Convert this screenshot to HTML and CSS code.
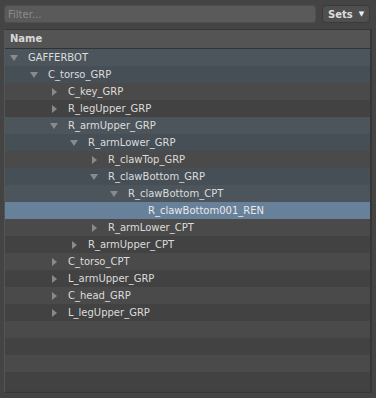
FILE: index.html
```html
<!DOCTYPE html>
<html lang="en">
<head>
    <meta charset="UTF-8">
    <meta name="viewport" content="width=device-width, initial-scale=1.0">
    <title>Hierarchy</title>
    <link rel="stylesheet" href="styles.css">
</head>
<body>

    <div class="toolbar">
        <input type="text" class="filter" placeholder="Filter...">
        <button class="sets-btn">Sets <span class="arrow">&#9660;</span></button>
    </div>

    <div class="tree">
        <div class="tree-header">Name</div>
        <div class="rows">
            <div class="row path lvl-0"><span class="toggle open"></span>GAFFERBOT</div>
            <div class="row path lvl-1"><span class="toggle open"></span>C_torso_GRP</div>
            <div class="row lvl-2"><span class="toggle"></span>C_key_GRP</div>
            <div class="row lvl-2"><span class="toggle"></span>R_legUpper_GRP</div>
            <div class="row path lvl-2"><span class="toggle open"></span>R_armUpper_GRP</div>
            <div class="row path lvl-3"><span class="toggle open"></span>R_armLower_GRP</div>
            <div class="row lvl-4"><span class="toggle"></span>R_clawTop_GRP</div>
            <div class="row path lvl-4"><span class="toggle open"></span>R_clawBottom_GRP</div>
            <div class="row path lvl-5"><span class="toggle open"></span>R_clawBottom_CPT</div>
            <div class="row selected lvl-6"><span class="toggle none"></span>R_clawBottom001_REN</div>
            <div class="row lvl-4"><span class="toggle"></span>R_armLower_CPT</div>
            <div class="row lvl-3"><span class="toggle"></span>R_armUpper_CPT</div>
            <div class="row lvl-2"><span class="toggle"></span>C_torso_CPT</div>
            <div class="row lvl-2"><span class="toggle"></span>L_armUpper_GRP</div>
            <div class="row lvl-2"><span class="toggle"></span>C_head_GRP</div>
            <div class="row lvl-2"><span class="toggle"></span>L_legUpper_GRP</div>
            <div class="row"></div>
            <div class="row"></div>
            <div class="row"></div>
            <div class="row"></div>
        </div>
    </div>

</body>
</html>
```

FILE: styles.css
```css
* {
    margin: 0;
    padding: 0;
    box-sizing: border-box;
}
body {
    font-family: 'DejaVu Sans', sans-serif;
    font-size: 10px;
    background-color: #444444;
    color: #dcdcdc;
}
.toolbar {
    display: flex;
    gap: 6px;
    padding: 5px 6px 0 4px;
    height: 23px;
}
.filter {
    flex: 1;
    height: 18px;
    padding: 0 3px;
    font-family: 'DejaVu Sans', sans-serif;
    font-size: 10px;
    color: #dcdcdc;
    background-color: #5a5a5a;
    border: 1px solid #4e4e4e;
    border-radius: 3px;
    outline: none;
}
.filter::placeholder {
    color: #8c8c8c;
}
.sets-btn {
    width: 48px;
    height: 18px;
    font-family: 'DejaVu Sans', sans-serif;
    font-size: 10px;
    font-weight: bold;
    color: #dcdcdc;
    background-color: #4f4f4f;
    border: 1px solid #3a3a3a;
    border-radius: 4px;
    display: flex;
    align-items: center;
    justify-content: center;
    gap: 6px;
}
.sets-btn .arrow {
    font-size: 7px;
    color: #f0f0f0;
}
.tree {
    margin: 6px 4px 0 4px;
    height: 364px;
    border: 1px solid #363636;
    border-left-color: #555555;
    border-right-width: 2px;
    background-color: #414141;
}
.tree-header {
    height: 19px;
    line-height: 18px;
    padding-left: 5px;
    font-weight: bold;
    color: #d8d8d8;
    background-color: #545454;
    border-bottom: 1px solid #333333;
}
.row {
    display: flex;
    align-items: center;
    height: 17px;
    background-color: #424242;
    white-space: nowrap;
}
.row:nth-child(odd) {
    background-color: #4a4a4a;
}
.row.path {
    background-color: #474f56;
}
.row.path:nth-child(odd) {
    background-color: #4d555c;
}
.row.selected {
    background-color: #67819b;
    color: #e8e8e8;
}
.toggle {
    width: 14px;
    height: 17px;
    margin-right: 7px;
    display: flex;
    align-items: center;
    justify-content: center;
}
.toggle::before {
    content: "";
    width: 0;
    height: 0;
    margin-left: 1px;
    border-top: 4px solid transparent;
    border-bottom: 4px solid transparent;
    border-left: 5px solid #8a8a8a;
}
.toggle.open::before {
    margin-left: 0;
    border-left: 4px solid transparent;
    border-right: 4px solid transparent;
    border-top: 6px solid #8a8a8a;
    border-bottom: 0;
}
.toggle.none::before {
    display: none;
}
.lvl-0 { padding-left: 2px; }
.lvl-1 { padding-left: 22px; }
.lvl-2 { padding-left: 42px; }
.lvl-3 { padding-left: 62px; }
.lvl-4 { padding-left: 82px; }
.lvl-5 { padding-left: 102px; }
.lvl-6 { padding-left: 122px; }
```
